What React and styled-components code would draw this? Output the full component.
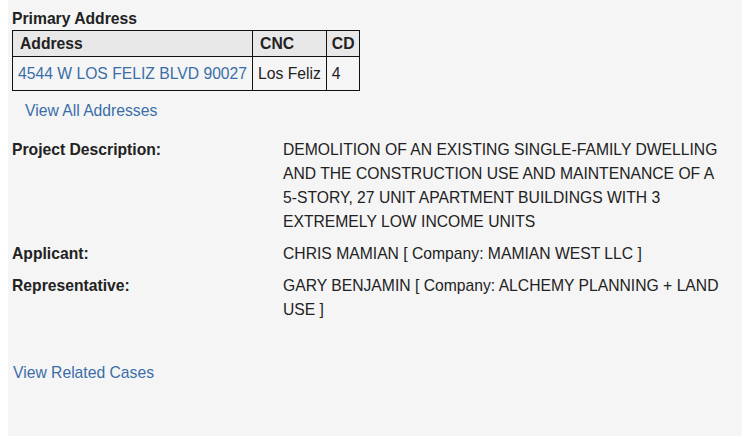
import React from 'react'
import styled, { createGlobalStyle } from 'styled-components'

const GlobalStyle = createGlobalStyle`
  body {
    margin: 0;
    background: #fff;
    font-family: "Liberation Sans", Arial, sans-serif;
    font-size: 15.7px;
    color: #222;
  }
`

const Panel = styled.section`
  margin-left: 8px;
  height: 436px;
  box-sizing: border-box;
  background: #f5f5f5;
  padding: 10px 7px 0 4px;
`

const Heading = styled.h4`
  margin: 0;
  font-size: 15.7px;
  font-weight: 700;
  line-height: 17px;
  height: 20px;
`

const AddressTable = styled.table`
  border-collapse: collapse;
  font-size: 15.7px;
  th, td {
    border: 1px solid #111;
    text-align: left;
    white-space: nowrap;
  }
  th {
    background: #e8e8e8;
    font-weight: 700;
    height: 25px;
    padding: 0 6px 0 7px;
  }
  td {
    height: 33px;
    padding: 0 5px;
  }
  th:last-child { padding: 0 0 0 5px; }
  td:last-child { padding: 0 18px 0 5px; }
`

const Link = styled.a`
  color: #3a6ea8;
  text-decoration: none;
  cursor: pointer;
`

const SubLink = styled.div`
  padding-left: ${p => p.$indent || 0}px;
  line-height: 24px;
  margin: ${p => p.$mt}px 0 ${p => p.$mb}px;
`

const Details = styled.dl`
  margin: 0;
  display: grid;
  grid-template-columns: 271px 442px;
  row-gap: 8px;
  line-height: 24px;
  dt {
    font-weight: 700;
  }
  dd {
    margin: 0;
  }
`

const rows = [
  {
    label: 'Project Description:',
    value:
      'DEMOLITION OF AN EXISTING SINGLE-FAMILY DWELLING AND THE CONSTRUCTION USE AND MAINTENANCE OF A 5-STORY, 27 UNIT APARTMENT BUILDINGS WITH 3 EXTREMELY LOW INCOME UNITS',
  },
  { label: 'Applicant:', value: 'CHRIS MAMIAN [ Company: MAMIAN WEST LLC ]' },
  {
    label: 'Representative:',
    value: 'GARY BENJAMIN [ Company: ALCHEMY PLANNING + LAND USE ]',
  },
]

const App = () => {
  return (
    <>
      <GlobalStyle />
      <Panel>
        <Heading>Primary Address</Heading>
        <AddressTable>
          <thead>
            <tr>
              <th>Address</th>
              <th>CNC</th>
              <th>CD</th>
            </tr>
          </thead>
          <tbody>
            <tr>
              <td><Link>4544 W LOS FELIZ BLVD 90027</Link></td>
              <td>Los Feliz</td>
              <td>4</td>
            </tr>
          </tbody>
        </AddressTable>
        <SubLink $indent={13} $mt={8} $mb={15}>
          <Link>View All Addresses</Link>
        </SubLink>
        <Details>
          {rows.map(r => (
            <React.Fragment key={r.label}>
              <dt>{r.label}</dt>
              <dd>{r.value}</dd>
            </React.Fragment>
          ))}
        </Details>
        <SubLink $indent={1} $mt={39} $mb={0}>
          <Link>View Related Cases</Link>
        </SubLink>
      </Panel>
    </>
  )
}

export default App
